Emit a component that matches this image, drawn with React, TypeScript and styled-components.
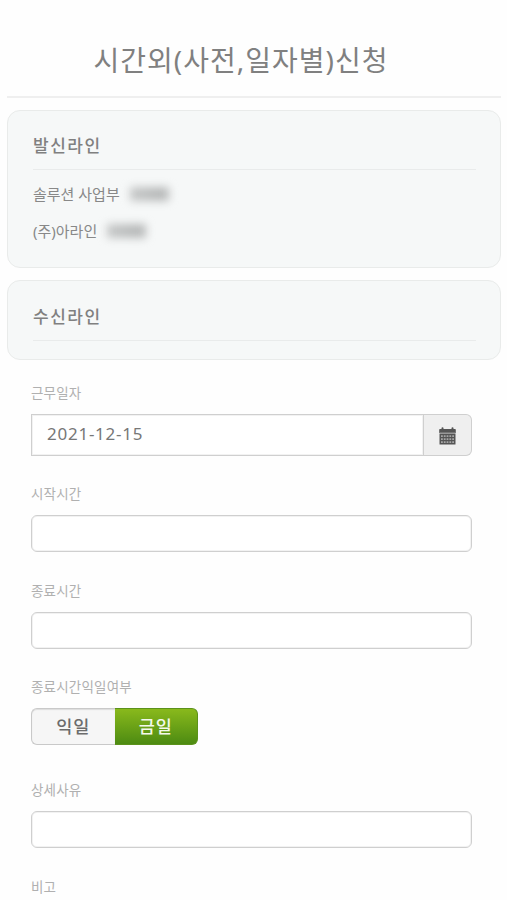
import React from 'react';
import styled, { createGlobalStyle, css } from 'styled-components';

const GlobalStyle = createGlobalStyle`
  *, *::before, *::after { box-sizing: border-box; }
  html, body { margin: 0; background: #fefefe; overflow: hidden; }
  body {
    font-family: 'Noto Sans', 'Noto Sans CJK KR', sans-serif;
    color: #777;
  }
`;

const Page = styled.main`
  height: 900px;
  padding: 0 6px 0 7px;
  overflow: hidden;
  background: #fefefe;
`;

const Header = styled.header`
  display: flex;
  justify-content: center;
  height: 98px;
  padding: 39px 26px 0 0;
  border-bottom: 2px solid #efefef;
`;

const Title = styled.h1`
  margin: 0;
  font-size: 28px;
  line-height: 42px;
  font-weight: 400;
  letter-spacing: 1px;
  white-space: nowrap;
  color: #808080;
`;

const Card = styled.section<{ $height: number }>`
  height: ${(p) => p.$height}px;
  margin-top: 12px;
  padding: 20px 24px 0 25px;
  border: 1px solid #e9ebea;
  border-radius: 13px;
  background: #f6f8f8;

  & + & {
    padding-top: 21px;
  }
`;

const CardTitle = styled.h2`
  height: 39px;
  margin: 0;
  border-bottom: 1px solid #e9ebeb;
  font-size: 17px;
  line-height: 30px;
  font-weight: 500;
  letter-spacing: 1.5px;
  color: #808080;
`;

const People = styled.ul`
  margin: 6px 0 0;
  padding: 0;
  list-style: none;
`;

const Person = styled.li`
  display: flex;
  align-items: center;
  gap: 10px;
  height: 36.5px;
  font-size: 15px;
  line-height: 24px;
  color: #888;
`;

const HiddenName = styled.span`
  width: 39px;
  height: 14px;
  background: linear-gradient(90deg, #c6c8c8, #b7b9b9 75%, #bbbdbd);
  filter: blur(4px);
`;

const Form = styled.form`
  padding: 22px 29px 0 24px;
`;

const Field = styled.div<{ $height: number }>`
  height: ${(p) => p.$height}px;
`;

const Label = styled.label`
  display: block;
  height: 32px;
  font-size: 13.5px;
  line-height: 23px;
  letter-spacing: 0.2px;
  color: #b0b0b0;
`;

const inputFrame = css`
  border: 1px solid #cfcfcf;
  background: #fff;
  box-shadow: inset 0 0 0 1px #f2f2f2;
  font: 17px 'Noto Sans', 'Noto Sans CJK KR', sans-serif;
  color: #777;
  outline: none;
`;

const TextInput = styled.input`
  ${inputFrame}
  display: block;
  width: 441px;
  height: 37px;
  padding: 0 15px;
  border-radius: 6px;
`;

const DateGroup = styled.div`
  display: flex;
  width: 441px;
  height: 42px;
`;

const DateInput = styled.input`
  ${inputFrame}
  flex: 1;
  min-width: 0;
  padding: 0 15px 3px;
  border-radius: 0;
  letter-spacing: 0.75px;
`;

const CalendarButton = styled.button`
  display: flex;
  align-items: center;
  justify-content: center;
  width: 48px;
  padding: 2px 1px 0 0;
  border: 1px solid #cfcfcf;
  border-left: 0;
  border-radius: 0 6px 6px 0;
  background: #efefef;
`;

const Toggle = styled.div`
  display: flex;
  width: 167px;
  height: 37px;
`;

const ToggleButton = styled.button<{ $active?: boolean }>`
  flex: 1;
  padding: 0 0 2px;
  font: 500 17.5px 'Noto Sans', 'Noto Sans CJK KR', sans-serif;
  letter-spacing: 1px;
  ${(p) =>
    p.$active
      ? css`
          border: 1px solid #5c921b;
          border-left: 0;
          border-radius: 0 6px 6px 0;
          background: linear-gradient(#89b91c, #4d8b12);
          color: #f4f9eb;
        `
      : css`
          border: 1px solid #c9c9c9;
          border-right: 0;
          border-radius: 6px 0 0 6px;
          background: #f6f6f6;
          box-shadow: inset 0 1px 1px #ddd;
          color: #6c6c6c;
        `}
`;

const CalendarIcon = () => (
  <svg width="17" height="18" viewBox="0 0 17 18" aria-hidden="true">
    <path
      fill="#555"
      d="M2.500 1.200a1 1 0 0 1 2 0V2h8v-.8a1 1 0 0 1 2 0V2H16a.8.8 0 0 1 .8.8V6H.2V2.800A.8.8 0 0 1 1 2h1.500z"
    />
    <path fill="#999" d="M.5 5.500h16v1.500H.5z" />
    <path fill="#555" d="M.5 7h16v10.500H.5z" />
    <path
      stroke="#a6a6a6"
      strokeWidth="1.700"
      strokeDasharray="1.800 1"
      d="M2 9.200h13M2 12.200h13M2 15.200h13"
    />
  </svg>
);

export default function App() {
  return (
    <>
      <GlobalStyle />
      <Page>
        <Header>
          <Title>시간외(사전,일자별)신청</Title>
        </Header>
        <Card $height={158}>
          <CardTitle>발신라인</CardTitle>
          <People>
            <Person>솔루션 사업부<HiddenName /></Person>
            <Person>(주)아라인<HiddenName /></Person>
          </People>
        </Card>
        <Card $height={80}>
          <CardTitle>수신라인</CardTitle>
        </Card>
        <Form>
          <Field $height={101}>
            <Label htmlFor="date">근무일자</Label>
            <DateGroup>
              <DateInput id="date" defaultValue="2021-12-15" />
              <CalendarButton type="button"><CalendarIcon /></CalendarButton>
            </DateGroup>
          </Field>
          <Field $height={97}>
            <Label htmlFor="start">시작시간</Label>
            <TextInput id="start" />
          </Field>
          <Field $height={96}>
            <Label htmlFor="end">종료시간</Label>
            <TextInput id="end" />
          </Field>
          <Field $height={103}>
            <Label as="div">종료시간익일여부</Label>
            <Toggle>
              <ToggleButton type="button">익일</ToggleButton>
              <ToggleButton type="button" $active>금일</ToggleButton>
            </Toggle>
          </Field>
          <Field $height={97}>
            <Label htmlFor="reason">상세사유</Label>
            <TextInput id="reason" />
          </Field>
          <Field $height={70}>
            <Label htmlFor="note">비고</Label>
            <TextInput id="note" />
          </Field>
        </Form>
      </Page>
    </>
  );
}
